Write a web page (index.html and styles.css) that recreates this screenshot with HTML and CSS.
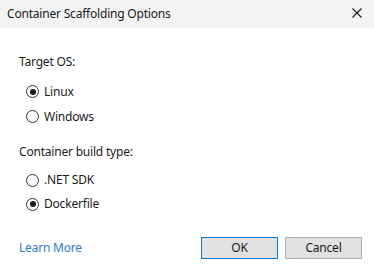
FILE: index.html
```html
<!DOCTYPE html>
<html lang="en">
<head>
<meta charset="utf-8">
<title>Container Scaffolding Options</title>
<link rel="stylesheet" href="styles.css">
</head>
<body>
<div class="dialog">
  <div class="titlebar">
    <span class="title">Container Scaffolding Options</span>
    <span class="close" aria-label="Close">
      <svg width="10" height="10" viewBox="0 0 10 10"><path d="M0.5 0.5 L9.5 9.5 M9.5 0.5 L0.5 9.5" stroke="#1a1a1a" stroke-width="1.1" fill="none"/></svg>
    </span>
  </div>
  <div class="content">
    <div class="group-label first">Target OS:</div>
    <div class="radio-list os">
      <div class="radio-row"><span class="radio checked"></span><span class="radio-text">Linux</span></div>
      <div class="radio-row"><span class="radio"></span><span class="radio-text">Windows</span></div>
    </div>
    <div class="group-label second">Container build type:</div>
    <div class="radio-list">
      <div class="radio-row"><span class="radio"></span><span class="radio-text">.NET SDK</span></div>
      <div class="radio-row"><span class="radio checked"></span><span class="radio-text">Dockerfile</span></div>
    </div>
    <div class="footer">
      <a class="link" href="#">Learn More</a>
      <div class="buttons">
        <button class="btn default">OK</button>
        <button class="btn">Cancel</button>
      </div>
    </div>
  </div>
</div>
</body>
</html>
```
FILE: styles.css
```css
html, body {
  margin: 0;
  padding: 0;
  background: #ffffff;
}
body {
  font-family: "Noto Sans", "Open Sans", sans-serif;
  font-size: 12px;
  letter-spacing: -0.2px;
  color: #1b1b1b;
  width: 374px;
  height: 267px;
  overflow: hidden;
}
.dialog {
  display: flex;
  flex-direction: column;
}
.titlebar {
  height: 28px;
  background: #f3f3f3;
  display: flex;
  align-items: center;
  justify-content: space-between;
  padding: 0 12px 0 7px;
}
.title {
  font-size: 12px;
  line-height: 16px;
  color: #1a1a1a;
  margin-top: -1px;
}
.close {
  display: flex;
  width: 10px;
  height: 10px;
  margin-top: -2px;
}
.content {
  padding: 0 12px 0 19px;
  display: flex;
  flex-direction: column;
}
.group-label {
  line-height: 16px;
  height: 16px;
}
.group-label.first {
  margin-top: 26px;
}
.group-label.second {
  margin-top: 15px;
}
.radio-list {
  display: flex;
  flex-direction: column;
  margin-top: 8px;
  padding-left: 7px;
}
.radio-list.os {
  margin-top: 9px;
}
.radio-row {
  height: 24px;
  display: flex;
  align-items: center;
}
.radio-list.os .radio-row {
  height: 25px;
}
.radio {
  box-sizing: border-box;
  width: 13px;
  height: 13px;
  border: 1px solid #333333;
  border-radius: 50%;
  display: flex;
  align-items: center;
  justify-content: center;
  margin-right: 5px;
}
.radio.checked::after {
  content: "";
  width: 6px;
  height: 6px;
  border-radius: 50%;
  background: #1a1a1a;
}
.radio-text {
  line-height: 16px;
}
.footer {
  margin-top: 21px;
  display: flex;
  align-items: center;
  justify-content: space-between;
}
.link {
  color: #2f7ccc;
  text-decoration: none;
  line-height: 16px;
}
.buttons {
  display: flex;
  gap: 7px;
}
.btn {
  box-sizing: border-box;
  width: 77px;
  height: 22px;
  background: #e1e1e1;
  border: 1px solid #adadad;
  font-family: inherit;
  font-size: 12px;
  letter-spacing: inherit;
  color: #1b1b1b;
  padding: 0;
  margin: 0;
  line-height: 16px;
}
.btn.default {
  border-color: #0078d7;
}
```
